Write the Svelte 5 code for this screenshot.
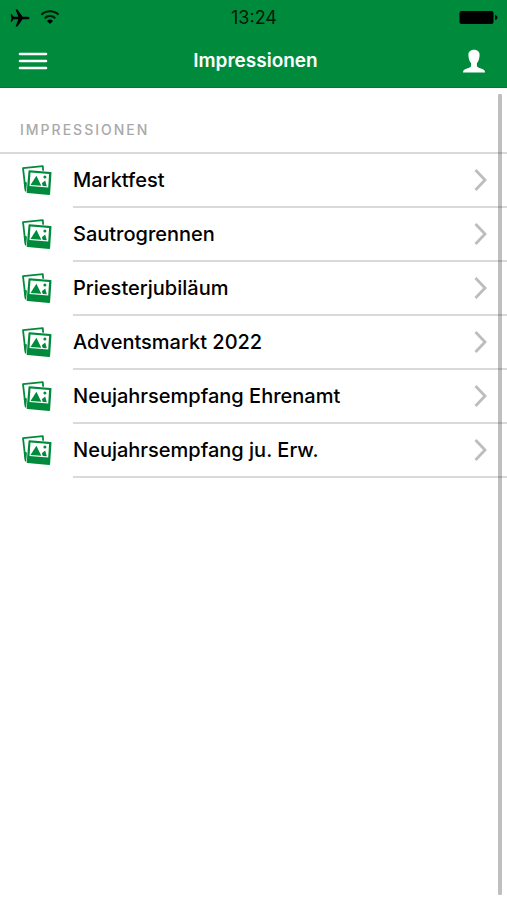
<script>
  const albums = [
    'Marktfest',
    'Sautrogrennen',
    'Priesterjubiläum',
    'Adventsmarkt 2022',
    'Neujahrsempfang Ehrenamt',
    'Neujahrsempfang ju. Erw.'
  ];
</script>

<div class="app">
  <header>
    <div class="status">
      <div class="signals">
        <svg width="20" height="18" viewBox="0 0 20 18" aria-hidden="true">
          <path d="M19.5 9C19.5 8.1 18.6 7.8 17.5 7.8H12.6L7.4 0.6H5.6L8.3 7.8H3.6L1.8 5.3H0.6L1.5 9L0.6 12.7H1.8L3.6 10.2H8.3L5.6 17.4H7.4L12.6 10.2H17.5C18.6 10.2 19.5 9.9 19.5 9Z" />
        </svg>
        <svg width="20" height="16" viewBox="0 0 20 16" aria-hidden="true">
          <path d="M1.4 4.8A12.4 12.4 0 0 1 18.6 4.8M4.7 8.2A7.8 7.8 0 0 1 15.3 8.2" fill="none" stroke="#001a08" stroke-width="2" />
          <path d="M10 14L7 11A4.3 4.3 0 0 1 13 11Z" />
        </svg>
      </div>
      <time>13:24</time>
      <svg class="battery" width="39" height="16" viewBox="0 0 39 16" aria-hidden="true">
        <rect x="0.5" y="1" width="34" height="13" rx="2" />
        <path d="M36 5Q38.5 5.5 38.5 7.5T36 10Z" />
      </svg>
    </div>
    <nav>
      <button aria-label="Menü">
        <svg width="30" height="20" viewBox="0 0 30 20">
          <path d="M2 3H28M2 10H28M2 17H28" fill="none" stroke="#fff" stroke-width="2.6" stroke-linecap="round" />
        </svg>
      </button>
      <h1>Impressionen</h1>
      <button aria-label="Profil">
        <svg width="22" height="24" viewBox="0 0 22 24">
          <path fill="#fff" d="M11 0.8C7.2 0.8 5.2 3.2 5.4 6.3C5.6 9.9 6.6 12.6 8.1 14.3V16.8C8.1 18.2 6.5 18.7 4 19.5C1.2 20.4 0 21.3 0 23.5H22C22 21.3 20.8 20.4 18 19.5C15.5 18.7 13.9 18.2 13.9 16.8V14.3C15.4 12.6 16.4 9.9 16.6 6.3C16.8 3.2 14.8 0.8 11 0.8Z" />
        </svg>
      </button>
    </nav>
  </header>

  <main>
    <h2>Impressionen</h2>
    <ul>
      {#each albums as album}
        <li>
          <a href="#album">
            <svg class="photos" width="32" height="32" viewBox="0 0 32 32" aria-hidden="true">
              <path d="M2 3.2L21.8 1.2L23.6 23L4.6 25.5Z" fill="#fff" stroke="#008b3c" stroke-width="1.8" stroke-linejoin="round" />
              <path d="M3.2 17.5L9 18.5V26.2L4.6 25.8Z" fill="#008b3c" stroke="#008b3c" stroke-linejoin="round" />
              <path d="M8.4 6.2L29.6 7.8L28.2 29L6.6 27.2Z" fill="#fff" stroke="#fff" stroke-width="3" stroke-linejoin="round" />
              <path d="M8.4 6.2L29.6 7.8L28.2 29L6.6 27.2Z" fill="#008b3c" stroke="#008b3c" stroke-width="1.8" stroke-linejoin="round" />
              <path d="M9.5 7.6L28.1 9.1L27.2 22.4L8.5 21Z" fill="#fff" />
              <path d="M9.5 20L15.4 10.8L20.3 20.8ZM20.8 18.2L24.2 15.5L25.8 21.2L21.8 21Z" fill="#008b3c" />
              <circle cx="23.9" cy="11.9" r="1.5" fill="#008b3c" />
            </svg>
            <span class="label">
              <span>{album}</span>
              <svg width="16" height="24" viewBox="0 0 16 24" aria-hidden="true">
                <path d="M2.5 2L12 12L2.5 22" fill="none" stroke="#bdbdbd" stroke-width="2.8" />
              </svg>
            </span>
          </a>
        </li>
      {/each}
    </ul>
  </main>
  <div class="scrollbar"></div>
</div>

<style>
  :global(body) {
    margin: 0;
    background: #fff;
  }
  .app {
    min-height: 100vh;
    font-family: Inter, 'Liberation Sans', sans-serif;
    color: #000;
  }
  header {
    background: #008b3c;
    border-bottom: 1px solid #007a34;
  }
  .status {
    display: grid;
    grid-template-columns: 1fr auto 1fr;
    align-items: center;
    height: 35px;
    padding: 0 9px 0 10px;
    fill: #000;
  }
  .signals {
    display: flex;
    align-items: center;
    gap: 10px;
  }
  time {
    font-size: 18px;
    line-height: 24px;
    color: #001a08;
  }
  .battery {
    justify-self: end;
  }
  nav {
    display: flex;
    align-items: center;
    justify-content: space-between;
    height: 52px;
    padding: 0 22px 0 18px;
  }
  button {
    display: flex;
    padding: 0;
    border: 0;
    background: none;
  }
  h1 {
    margin: 0;
    font-size: 19px;
    line-height: 28px;
    font-weight: 600;
    color: #fff;
  }
  h2 {
    margin: 0;
    padding: 32px 20px 12px;
    border-bottom: 2px solid #dadada;
    font-size: 14px;
    line-height: 20px;
    font-weight: 500;
    letter-spacing: 2px;
    text-transform: uppercase;
    color: #a9a9a9;
  }
  ul {
    margin: 0;
    padding: 0;
    list-style: none;
  }
  a {
    display: flex;
    align-items: center;
    gap: 20px;
    padding-left: 21px;
    color: inherit;
    text-decoration: none;
  }
  .photos {
    flex: none;
  }
  .label {
    flex: 1;
    display: flex;
    align-items: center;
    justify-content: space-between;
    height: 52px;
    padding-right: 18px;
    border-bottom: 2px solid #dadada;
    font-size: 20px;
    font-weight: 500;
  }
  .scrollbar {
    position: fixed;
    top: 94px;
    right: 5px;
    bottom: 5px;
    width: 4px;
    border-radius: 1px;
    background: rgba(0, 0, 0, 0.25);
  }
</style>
